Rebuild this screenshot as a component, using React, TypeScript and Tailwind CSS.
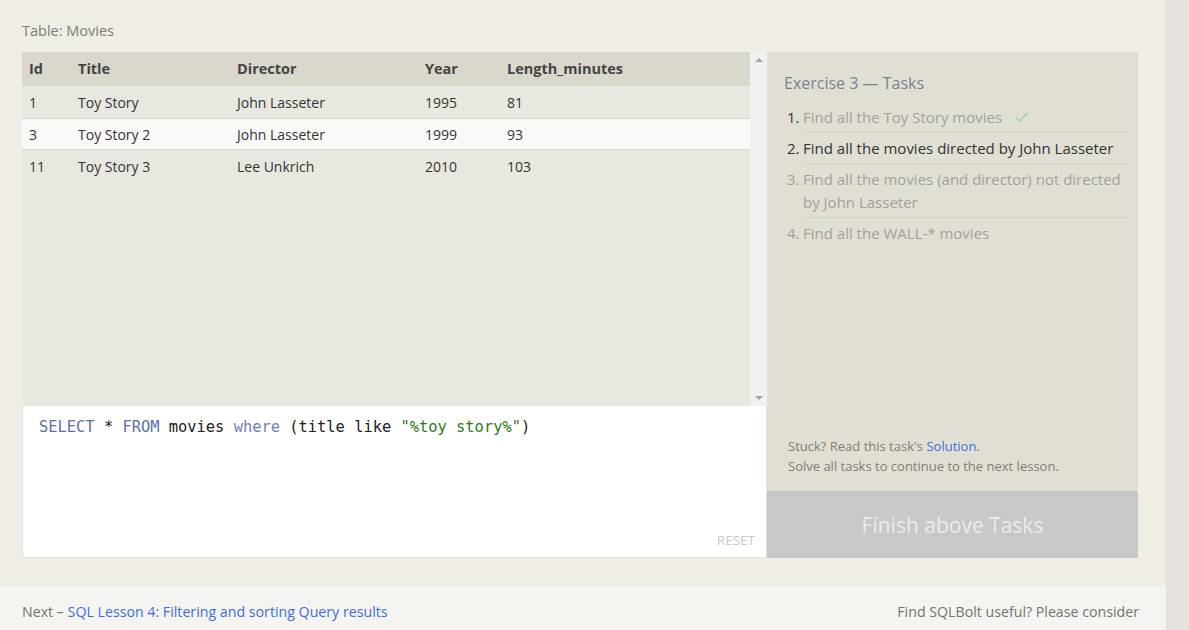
import { Check } from "lucide-react";

const movies = [
  { id: 1, title: "Toy Story", director: "John Lasseter", year: 1995, len: 81 },
  { id: 3, title: "Toy Story 2", director: "John Lasseter", year: 1999, len: 93 },
  { id: 11, title: "Toy Story 3", director: "Lee Unkrich", year: 2010, len: 103 },
];

const tasks = [
  { text: "Find all the Toy Story movies", state: "done" },
  { text: "Find all the movies directed by John Lasseter", state: "current" },
  { text: "Find all the movies (and director) not directed by John Lasseter", state: "todo" },
  { text: "Find all the WALL-* movies", state: "todo" },
];

function Row({ m, selected }: { m: (typeof movies)[number]; selected: boolean }) {
  return (
    <div
      className={
        "grid grid-cols-[49px_159px_188px_82px_1fr] h-[32px] items-center pl-[7px] text-[14px] text-[#333] border-y " +
        (selected ? "bg-[#f9f9f8] border-[#dcdad2]" : "bg-[#e9e8e0] border-transparent")
      }
    >
      <span>{m.id}</span>
      <span>{m.title}</span>
      <span>{m.director}</span>
      <span>{m.year}</span>
      <span>{m.len}</span>
    </div>
  );
}

export default function App() {
  return (
    <div className="flex w-[1189px] h-[630px] overflow-hidden font-['Open_Sans',sans-serif]">
      <div className="w-[1166px] flex flex-col bg-[#efede6]">
        <div className="pl-[22px] pt-[21px] pb-[28px]">
          <p className="text-[14.5px] text-[#7b7b7b] h-[31px] leading-[20px]">Table: Movies</p>
          <div className="flex">
            {/* left: table + editor */}
            <div className="w-[745px] flex flex-col">
              <div className="flex h-[354px]">
                <div className="flex-1 bg-[#e9e8e0]">
                  <div className="grid grid-cols-[49px_159px_188px_82px_1fr] h-[34px] items-center pl-[7px] bg-[#dad8cc] text-[14.5px] font-bold text-[#444]">
                    <span>Id</span>
                    <span>Title</span>
                    <span>Director</span>
                    <span>Year</span>
                    <span>Length_minutes</span>
                  </div>
                  {movies.map((m, i) => (
                    <Row key={m.id} m={m} selected={i === 1} />
                  ))}
                </div>
                <div className="w-[17px] bg-[#f0f0f0] flex flex-col justify-between items-center py-[6px]">
                  <span className="w-0 h-0 border-x-[4px] border-x-transparent border-b-[4px] border-b-[#a3a3a3]" />
                  <span className="w-0 h-0 border-x-[4px] border-x-transparent border-t-[4px] border-t-[#a3a3a3]" />
                </div>
              </div>
              <div className="h-[152px] bg-white border border-[#e4e2dc] border-t-0 relative">
                <pre className="pl-[16px] pt-[10px] text-[15.4px] font-['DejaVu_Sans_Mono',monospace] text-[#222]">
                  <span className="text-[#5b6fae]">SELECT</span> * <span className="text-[#5b6fae]">FROM</span> movies{" "}
                  <span className="text-[#6f7fc0]">where</span> (title like{" "}
                  <span className="text-[#2d7a21]">"%toy story%"</span>)
                </pre>
                <span className="absolute right-[11px] bottom-[7px] text-[13.5px] text-[#c9c9c9]">RESET</span>
              </div>
            </div>
            {/* right: tasks */}
            <div className="w-[371px] flex flex-col bg-[#e1dfd4]">
              <div className="flex-1 flex flex-col pl-[17px] pr-[7px] pt-[20px]">
                <h3 className="text-[16px] text-[#7b8190] leading-[22px]">Exercise 3 — Tasks</h3>
                <ol className="mt-[8px] text-[15px]">
                  {tasks.map((t, i) => (
                    <li key={i} className="flex">
                      <span className={"w-[19px] pl-[3px] pt-[4px] leading-[23px] " + (t.state === "todo" ? "text-[#a3a19c]" : "text-[#333]")}>
                        {i + 1}.
                      </span>
                      <div
                        className={
                          "flex-1 pt-[4px] pb-[3px] leading-[23px] " +
                          (i < 3 ? "border-b border-[#d3d1c6] " : "") +
                          (t.state === "current" ? "text-[#333]" : "text-[#a3a19c]")
                        }
                      >
                        {t.text}
                        {t.state === "done" && <Check className="inline ml-[11px] -mt-[3px] text-[#8fcf94]" size={17} strokeWidth={1.5} />}
                      </div>
                    </li>
                  ))}
                </ol>
                <div className="mt-auto pb-[15px] pl-[4px] text-[13px] leading-[20px] text-[#817c76]">
                  <p>
                    Stuck? Read this task's <span className="text-[#3b6fe0]">Solution</span>.
                  </p>
                  <p>Solve all tasks to continue to the next lesson.</p>
                </div>
              </div>
              <div className="h-[67px] bg-[#c8c8c8] flex items-center justify-center pt-[3px] text-[21px] text-[#ebebeb]">
                Finish above Tasks
              </div>
            </div>
          </div>
        </div>
        <div className="flex-1 bg-[#f5f4f0] flex justify-between items-start pt-[15px] pl-[22px] pr-[27px] text-[14.2px]">
          <p className="text-[#77736d]">
            Next – <span className="text-[#3b6fe0]">SQL Lesson 4: Filtering and sorting Query results</span>
          </p>
          <p className="text-[#77736d]">Find SQLBolt useful? Please consider</p>
        </div>
      </div>
      <div className="flex-1 bg-[#e6e2de]" />
    </div>
  );
}
